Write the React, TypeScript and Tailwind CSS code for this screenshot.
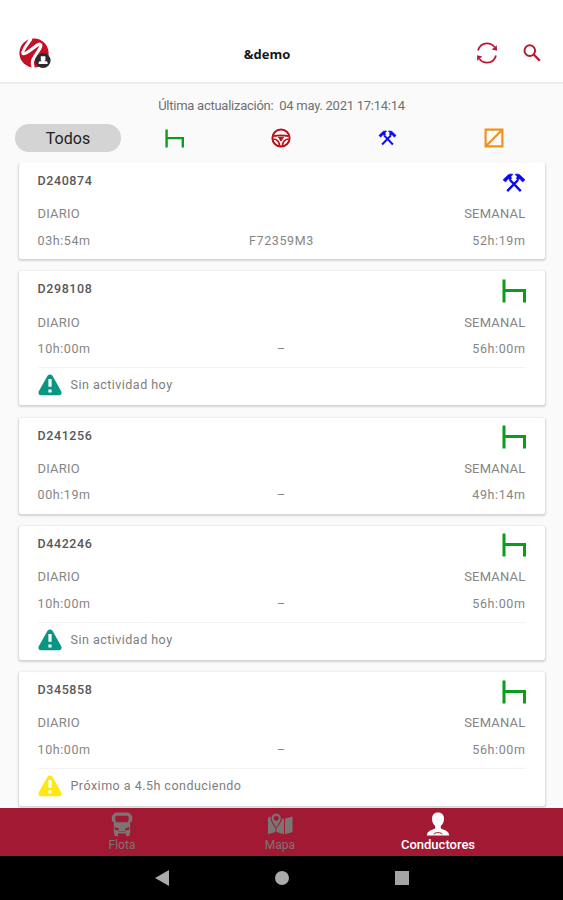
import type { ReactNode } from 'react';
import clsx from 'clsx';

type Activity = 'rest' | 'work';

interface Driver {
  id: string;
  daily: string;
  weekly: string;
  plate: string;
  activity: Activity;
  alert?: { text: string; className: string };
}

const DRIVERS: Driver[] = [
  { id: 'D240874', daily: '03h:54m', weekly: '52h:19m', plate: 'F72359M3', activity: 'work' },
  {
    id: 'D298108', daily: '10h:00m', weekly: '56h:00m', plate: '–', activity: 'rest',
    alert: { text: 'Sin actividad hoy', className: 'text-[#079682]' },
  },
  { id: 'D241256', daily: '00h:19m', weekly: '49h:14m', plate: '–', activity: 'rest' },
  {
    id: 'D442246', daily: '10h:00m', weekly: '56h:00m', plate: '–', activity: 'rest',
    alert: { text: 'Sin actividad hoy', className: 'text-[#079682]' },
  },
  {
    id: 'D345858', daily: '10h:00m', weekly: '56h:00m', plate: '–', activity: 'rest',
    alert: { text: 'Próximo a 4.5h conduciendo', className: 'text-[#ffe714]' },
  },
];

function BedIcon({ className }: { className: string }) {
  return (
    <svg viewBox="0 0 24 24" className={className} fill="none" stroke="#0c9c1c" strokeWidth="3" aria-hidden="true">
      <path d="M2 0.5v23M2 11.5h20.5v12" />
    </svg>
  );
}

function HammersIcon({ className }: { className: string }) {
  return (
    <svg viewBox="0 0 24 20" className={className} aria-hidden="true">
      <path d="M8 7 18.800 18.200M16 7 5.200 18.200" fill="none" stroke="#0b0bf0" strokeWidth="2.500" />
      <path
        d="M1 6.800 6.600 1.500Q8.600.7 11 1.200L8.900 3.600 9.600 5.600 7.900 7.300 6.300 5.800 3.500 9ZM23 6.800 17.400 1.500Q15.400.7 13 1.200L15.100 3.600 14.400 5.600 16.100 7.300 17.700 5.800 20.500 9Z"
        fill="#0b0bf0" stroke="#0b0bf0" strokeWidth=".6"
      />
    </svg>
  );
}

function WheelIcon() {
  return (
    <svg viewBox="0 0 20 20" className="h-5 w-5" fill="none" stroke="#b90d18" aria-hidden="true">
      <circle cx="10" cy="10" r="8.6" strokeWidth="2" />
      <path d="M2.500 8.200Q10 6.500 17.500 8.200M2.500 11Q8.200 11.500 8.600 18M17.500 11Q11.800 11.500 11.400 18" strokeWidth="1.700" />
      <path d="M7.500 9.200h5L10 13Z" fill="#b90d18" strokeWidth="1" />
    </svg>
  );
}

function AvailableIcon() {
  return (
    <svg viewBox="0 0 20 20" className="h-5 w-5" fill="none" stroke="#f0921e" strokeWidth="2.2" aria-hidden="true">
      <path d="M1.6 1.6h16.8v16.8H1.6ZM2.5 17.5l15-15" />
    </svg>
  );
}

function AlertIcon({ className }: { className: string }) {
  return (
    <svg viewBox="0 0 24 22" className={clsx('h-[22px] w-6 shrink-0', className)} aria-hidden="true">
      <path d="M9.5 1.8Q12-.9 14.5 1.8L23.3 17.5Q24.3 21 21 21.3H3Q-.3 21 .7 17.5Z" fill="currentColor" />
      <path d="M12 5v7.8M12 15.4v3.2" stroke="#fff" strokeWidth="3.2" />
    </svg>
  );
}

function Logo() {
  return (
    <svg viewBox="0 0 32 32" className="ml-[-1px] mt-0.5 h-8 w-8" aria-hidden="true">
      <circle cx="15" cy="15" r="14.6" fill="#c40f24" />
      <path
        d="M11.500 1.500C8 6.500 2.700 13 4 15.300 6 17.500 14.500 9.500 19 6.700 22.500 5 22.500 8 20.300 11.300L14.500 20.500Q12.500 24.500 14 28.500"
        fill="none" stroke="#fff" strokeWidth="3.2" strokeLinecap="round"
      />
      <circle cx="24" cy="22.5" r="7.6" fill="#282c30" />
      <path d="M21.8 18.2h4.6v4l-1 1.1h2.3q1 .3 1 2.7h-9.2q0-2.4 1-2.7h2.3l-1-1.1Z" fill="#fff" />
    </svg>
  );
}

function RefreshIcon() {
  return (
    <svg viewBox="0 0 22 22" className="h-[22px] w-[22px]" fill="none" stroke="#ba1839" strokeWidth="1.8" aria-hidden="true">
      <path d="M2 8.600C3.400 3.800 7 1.400 11 1.400Q15.500 1.400 18.500 5M20 13.400C18.600 18.200 15 20.600 11 20.600Q6.500 20.600 3.500 17" />
      <path d="m20.800 3.200.2 5.500-5.300-1.200ZM1.200 18.800 1 13.300l5.300 1.200Z" fill="#ba1839" stroke="none" />
    </svg>
  );
}

function SearchIcon() {
  return (
    <svg viewBox="0 0 18 18" className="h-[18px] w-[18px]" fill="none" stroke="#b31f31" strokeWidth="2" aria-hidden="true">
      <circle cx="6.8" cy="6.6" r="5.3" />
      <path d="m10.8 10.6 6 6.2" strokeWidth="2.3" />
    </svg>
  );
}

function BusIcon() {
  return (
    <svg viewBox="0 0 22 24" className="h-6 w-[22px]" aria-hidden="true">
      <path
        fillRule="evenodd"
        d="M5 .5h12q2.500 0 2.800 2.500 1.400 0 1.400 1.500v4q0 1.200-1.400 1.200h-.6V21.500h-.7V24h-3.500v-2.500H7V24H3.500v-2.500h-.7V9.700h-.6Q.8 9.700.8 8.500v-4Q.8 3 2.200 3 2.500.5 5 .5ZM4.800 3.800q-1.300 3 .2 6.400h12q1.500-3.400.2-6.400Z"
        fill="#7b7673"
      />
      <path d="M4 15.500 7.500 16.500v1.800L4 17.500ZM18 15.500 14.500 16.500v1.800L18 17.500ZM7.500 19.500h7" fill="#a21934" stroke="#a21934" strokeWidth=".5" />
    </svg>
  );
}

function MapIcon() {
  return (
    <svg viewBox="0 0 26 22" className="h-[22px] w-[26px]" aria-hidden="true">
      <path d="M1 4.500 3.500 3.500q-.3 6 5 11V19L1 21.300ZM9.500 14.500q5-4.500 5.500-9L17 6v15.300l-7.500-2.300ZM18 5.500 25.500 3.500V19L18 21.300Z" fill="#7b7673" />
      <path
        fillRule="evenodd"
        d="M9.200.3a5 5 0 0 1 5 5q0 3-5 9.500-5-6.500-5-9.500a5 5 0 0 1 5-5Zm0 2.700a2.200 2.200 0 1 0 0 4.400 2.200 2.200 0 1 0 0-4.400Z"
        fill="#7b7673" stroke="#a21934" strokeWidth=".7"
      />
    </svg>
  );
}

function PersonIcon() {
  return (
    <svg viewBox="0 0 24 24" className="h-6 w-6" aria-hidden="true">
      <path d="M12 .5c4 0 6 2.500 6 6.300 0 3-1.300 5.700-3.200 7.200v2.500l5.400 2.300q2.600 1.200 3.100 4.700H.7q.5-3.500 3.100-4.700l5.400-2.300V14C7.300 12.500 6 9.800 6 6.800 6 3 8 .5 12 .5Z" fill="#fff" />
      <path d="M8 22.500q.5-1.800 2.500-1.800h3q2 0 2.500 1.800" fill="none" stroke="#a21934" strokeWidth="1" />
    </svg>
  );
}

function DriverCard({ driver }: { driver: Driver }) {
  return (
    <article
      className={clsx(
        'shrink-0 rounded-[2px] bg-white px-[19px] shadow-[0_1px_2px_1px_rgba(0,0,0,0.15)]',
        driver.alert ? 'h-[134px]' : 'h-[96px]',
      )}
    >
      <div className="flex h-[37px] items-center justify-between">
        <h2 className="text-[12.5px] font-medium tracking-[0.6px] text-[#585858]">{driver.id}</h2>
        <div className="pt-0.5">
          {driver.activity === 'work' ? <HammersIcon className="h-5 w-6" /> : <BedIcon className="h-6 w-6" />}
        </div>
      </div>
      <div className="flex h-[28px] items-center justify-between text-[13px] tracking-[0.2px] text-[#858585]">
        <span>DIARIO</span>
        <span>SEMANAL</span>
      </div>
      <div className="grid h-[26px] grid-cols-3 items-center text-[12.5px] tracking-[0.6px] text-[#858585]">
        <span>{driver.daily}</span>
        <span className="text-center">{driver.plate}</span>
        <span className="text-right">{driver.weekly}</span>
      </div>
      {driver.alert && (
        <div className="mt-[5px] flex h-[35px] items-center gap-[9px] border-t border-[#f4f4f4] text-[12.5px] tracking-[0.48px] text-[#7d7d7d]">
          <AlertIcon className={driver.alert.className} />
          <span>{driver.alert.text}</span>
        </div>
      )}
    </article>
  );
}

function NavItem({ icon, label, active = false }: { icon: ReactNode; label: string; active?: boolean }) {
  return (
    <div className={clsx('flex w-[158px] flex-col items-center pt-[3px]', active ? 'text-white' : 'text-[#7b7673]')}>
      <div className="flex h-[25px] items-center justify-center">{icon}</div>
      <span className={clsx('mt-px leading-4', active ? 'text-[13px] font-medium' : 'text-[12px]')}>{label}</span>
    </div>
  );
}

export default function App() {
  return (
    <div className="flex h-[900px] w-[563px] flex-col overflow-hidden bg-[#fafafa] font-[Roboto,sans-serif]">
      <header className="grid h-[84px] shrink-0 grid-cols-[1fr_auto_1fr] items-center border-b-2 border-[#ececec] bg-white px-5 pt-6">
        <Logo />
        <h1 className="mr-[29px] mt-[3px] font-['Open_Sans',sans-serif] text-[13px] font-bold text-[#171717]">&amp;demo</h1>
        <div className="flex items-center justify-end gap-[25px] pr-[2px]">
          <RefreshIcon />
          <SearchIcon />
        </div>
      </header>

      <p className="mt-[13px] h-[18px] shrink-0 whitespace-pre text-center text-[13px] leading-[18px] tracking-[-0.26px] text-[#707070]">
        Última actualización:{'  '}04 may. 2021 17:14:14
      </p>

      <nav className="mt-[9px] flex h-7 shrink-0 items-center pl-[15px]">
        <div className="flex h-7 w-[106px] items-center justify-center rounded-full bg-[#d4d4d4] pt-0.5 text-[16px] text-[#222]">
          Todos
        </div>
        <div className="flex w-[107px] justify-center"><BedIcon className="h-[19px] w-[19px]" /></div>
        <div className="flex w-[106px] justify-center"><WheelIcon /></div>
        <div className="flex w-[107px] justify-center"><HammersIcon className="h-4 w-[19px]" /></div>
        <div className="flex w-[106px] justify-center"><AvailableIcon /></div>
      </nav>

      <main className="mt-[11px] flex min-h-0 flex-1 flex-col gap-[12.300px] overflow-hidden px-[18.5px]">
        {DRIVERS.map((driver) => (
          <DriverCard key={driver.id} driver={driver} />
        ))}
      </main>

      <nav className="flex h-[48px] shrink-0 justify-center bg-[#a21934] pr-[3px]">
        <NavItem icon={<BusIcon />} label="Flota" />
        <NavItem icon={<MapIcon />} label="Mapa" />
        <NavItem icon={<PersonIcon />} label="Conductores" active />
      </nav>

      <footer className="flex h-[44px] shrink-0 items-center justify-center bg-black">
        <div className="flex w-[120px] justify-center">
          <svg viewBox="0 0 14 16" className="h-4 w-[14px]" aria-hidden="true"><path d="M0 8 14 0v16Z" fill="#aaa" /></svg>
        </div>
        <div className="flex w-[120px] justify-center"><div className="h-[14px] w-[14px] rounded-full bg-[#aaa]" /></div>
        <div className="flex w-[120px] justify-center"><div className="h-[14px] w-[14px] bg-[#a4a4a4]" /></div>
      </footer>
    </div>
  );
}
